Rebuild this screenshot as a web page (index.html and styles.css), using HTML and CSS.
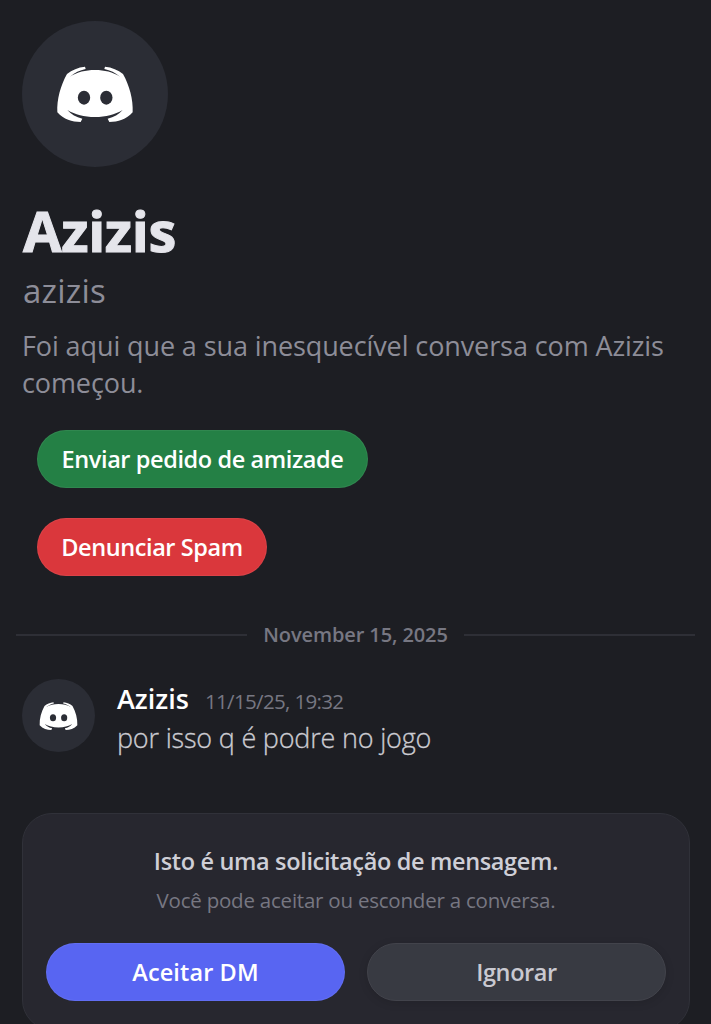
FILE: index.html
```html
<!DOCTYPE html>
<html lang="pt-BR">
<head>
<meta charset="utf-8">
<title>Azizis</title>
<link rel="stylesheet" href="styles.css">
</head>
<body>
<svg class="defs" aria-hidden="true">
  <symbol id="logo" viewBox="0 0 270 210">
    <path fill="#fff" d="M105 20 C84 22 66 30 51 42 C32 76 20 118 22 157 C41 178 66 186 92 186 L97 176 C78 172 64 163 52 150 C76 164 102 171 135 171 C168 171 194 164 218 150 C206 163 192 172 173 176 L178 186 C204 186 229 178 248 157 C250 118 238 76 219 42 C204 30 186 22 165 20 L163 27 C181 31 196 38 210 50 C188 36 164 30 135 30 C106 30 82 36 60 50 C74 38 89 31 107 27 Z"/>
    <ellipse cx="102" cy="113" rx="18.500" ry="21" fill="#2b2d35"/>
    <ellipse cx="169" cy="113" rx="18.500" ry="21" fill="#2b2d35"/>
  </symbol>
</svg>
<main class="chat">
  <header class="intro">
    <div class="avatar avatar-large"><svg class="logo"><use href="#logo"/></svg></div>
    <h1 class="name">Azizis</h1>
    <p class="handle">azizis</p>
    <p class="about">Foi aqui que a sua inesquecível conversa com Azizis<br>começou.</p>
    <div class="actions">
      <button class="button friend">Enviar pedido de amizade</button>
      <button class="button spam">Denunciar Spam</button>
    </div>
  </header>
  <div class="divider"><span>November 15, 2025</span></div>
  <article class="message">
    <div class="avatar"><svg class="logo"><use href="#logo"/></svg></div>
    <div class="content">
      <div class="meta"><span class="author">Azizis</span><time class="time">11/15/25, 19:32</time></div>
      <p class="body">por isso q é podre no jogo</p>
    </div>
  </article>
  <section class="request">
    <h2 class="request-title">Isto é uma solicitação de mensagem.</h2>
    <p class="request-text">Você pode aceitar ou esconder a conversa.</p>
    <div class="choices">
      <button class="button accept">Aceitar DM</button>
      <button class="button ignore">Ignorar</button>
    </div>
  </section>
</main>
</body>
</html>
```
FILE: styles.css
```css
* { box-sizing: border-box; margin: 0; padding: 0; }
body {
  background: #1d1e23;
  font-family: "Open Sans", "Noto Sans", sans-serif;
  overflow: hidden;
}
.defs { display: none; }
.chat { height: 1024px; overflow: hidden; padding-top: 21px; }
.intro { padding: 0 22px; }
.avatar {
  display: flex;
  align-items: center;
  justify-content: center;
  flex: none;
  width: 73px;
  height: 73px;
  border-radius: 50%;
  background: #2b2d35;
}
.avatar-large { width: 146px; height: 146px; }
.logo { width: 45px; height: 35px; margin-top: 1px; }
.avatar-large .logo { width: 90px; height: 70px; }
.name { margin-top: 23px; padding-left: 1px; font-size: 56px; line-height: 80px; font-weight: 700; color: #e5e5eb; letter-spacing: -.4px; -webkit-text-stroke: 1px #e5e5eb; }
.handle { margin-top: 1px; padding-left: 1px; font-size: 33px; line-height: 40px; letter-spacing: .2px; color: #8d8d98; }
.about { margin-top: 16px; font-size: 27px; line-height: 37px; letter-spacing: -.1px; color: #8d8d98; white-space: nowrap; }
.actions { display: flex; flex-direction: column; align-items: flex-start; gap: 30px; margin-top: 29px; padding-left: 15px; }
.button {
  display: flex;
  align-items: center;
  justify-content: center;
  height: 58px;
  border: 1px solid rgba(255, 255, 255, .06);
  border-radius: 29px;
  color: #fff;
  font: 600 23.5px/34px "Open Sans", "Noto Sans", sans-serif;
  letter-spacing: -.4px;
  white-space: nowrap;
}
.friend { width: 331px; background: #248045; }
.spam { width: 230px; background: #da373c; }
.divider {
  display: flex;
  align-items: center;
  gap: 16px;
  margin: 43px 16px 0;
  height: 30px;
  font-size: 20px;
  font-weight: 600;
  letter-spacing: -.1px;
  color: #777782;
  white-space: nowrap;
}
.divider::before, .divider::after { content: ""; flex: 1; height: 2px; margin-top: 1px; background: #2e2f36; }
.message { display: flex; gap: 22px; height: 76px; margin-top: 30px; padding: 0 22px; }
.meta { display: flex; align-items: baseline; gap: 16px; height: 40px; line-height: 40px; }
.author { font-size: 27px; font-weight: 600; color: #fff; }
.time { font-size: 20.5px; letter-spacing: -.65px; color: #777782; }
.body { font-size: 27px; line-height: 38px; font-weight: 300; letter-spacing: -.2px; color: #cbcbd1; -webkit-text-stroke: .3px #cbcbd1; }
.request {
  height: 217px;
  margin: 58px 21px 0 22px;
  padding: 30px 23px 0;
  border: 1px solid #303139;
  border-radius: 30px;
  background: #27272f;
  text-align: center;
}
.request-title { font-size: 23.5px; line-height: 34px; font-weight: 600; letter-spacing: -.35px; color: #cfcfd7; }
.request-text { margin-top: 8px; font-size: 20.5px; line-height: 28px; letter-spacing: -.22px; color: #777782; }
.choices { display: grid; grid-template-columns: 1fr 1fr; gap: 22px; margin-top: 29px; }
.accept { background: #5865f2; letter-spacing: .1px; }
.ignore { background: #383a42; border-color: #42434b; color: #c9c9d1; box-shadow: 0 2px 10px rgba(0, 0, 0, .12); }
```
